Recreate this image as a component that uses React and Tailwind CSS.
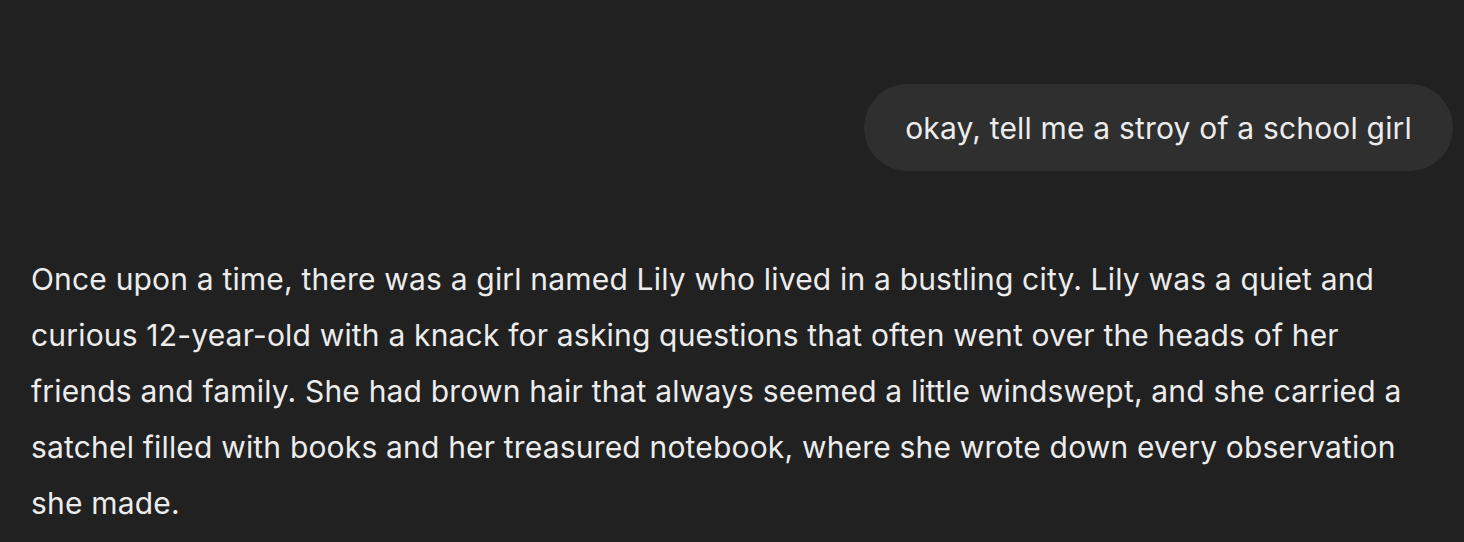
import React from 'react';

const story =
    'Once upon a time, there was a girl named Lily who lived in a bustling city. Lily was a quiet and curious 12-year-old with a knack for asking questions that often went over the heads of her friends and family. She had brown hair that always seemed a little windswept, and she carried a satchel filled with books and her treasured notebook, where she wrote down every observation she made.';

const App = () => {
    return (
        <div
            className="min-h-screen bg-[#212121] text-[#ececec] pt-[84px] pl-[31px] pr-[11px]"
            style={{ fontFamily: 'Inter, "Noto Sans", sans-serif' }}
        >
            <div className="flex justify-end">
                <div className="bg-[#2f2f2f] rounded-full px-[41px] h-[87px] flex items-center text-[30px] tracking-[0.006em] leading-[36px]">
                    okay, tell me a stroy of a school girl
                </div>
            </div>

            <div className="mt-[80px] w-[1380px] text-[30px] tracking-[0.006em] leading-[56px]">
                <p>{story}</p>
            </div>
        </div>
    );
};

export default App;
